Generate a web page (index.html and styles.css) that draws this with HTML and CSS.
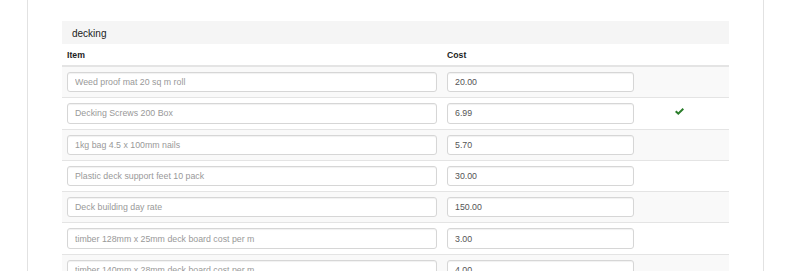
FILE: index.html
```html
<!DOCTYPE html>
<html lang="en">
<head>
  <meta charset="UTF-8">
  <title>Decking costs</title>
  <link rel="stylesheet" href="styles.css">
</head>
<body>
  <div class="page">
    <div class="panel">
      <div class="panel-heading">decking</div>
      <table class="costs">
        <thead>
          <tr>
            <th class="col-item">Item</th>
            <th class="col-cost">Cost</th>
            <th class="col-status"></th>
          </tr>
        </thead>
        <tbody>
          <tr>
            <td><input type="text" placeholder="Weed proof mat 20 sq m roll"></td>
            <td><input type="text" value="20.00"></td>
            <td class="status"></td>
          </tr>
          <tr>
            <td><input type="text" placeholder="Decking Screws 200 Box"></td>
            <td><input type="text" value="6.99"></td>
            <td class="status">
              <svg class="tick" viewBox="0 0 9 7" width="9" height="7"><polygon points="0,3.9 1.4,2.5 3.3,4.3 7.6,0 9,1.4 3.3,7"/></svg>
            </td>
          </tr>
          <tr>
            <td><input type="text" placeholder="1kg bag 4.5 x 100mm nails"></td>
            <td><input type="text" value="5.70"></td>
            <td class="status"></td>
          </tr>
          <tr>
            <td><input type="text" placeholder="Plastic deck support feet 10 pack"></td>
            <td><input type="text" value="30.00"></td>
            <td class="status"></td>
          </tr>
          <tr>
            <td><input type="text" placeholder="Deck building day rate"></td>
            <td><input type="text" value="150.00"></td>
            <td class="status"></td>
          </tr>
          <tr>
            <td><input type="text" placeholder="timber 128mm x 25mm deck board cost per m"></td>
            <td><input type="text" value="3.00"></td>
            <td class="status"></td>
          </tr>
          <tr>
            <td><input type="text" placeholder="timber 140mm x 28mm deck board cost per m"></td>
            <td><input type="text" value="4.00"></td>
            <td class="status"></td>
          </tr>
        </tbody>
      </table>
    </div>
  </div>
</body>
</html>
```

FILE: styles.css
```css
html, body {
  margin: 0;
  background: #fff;
  font-family: "Liberation Sans", Arial, sans-serif;
  color: #333;
  overflow: hidden;
}

.page {
  margin-left: 27px;
  width: 737px;
  height: 271px;
  box-sizing: border-box;
  border-left: 1px solid #e2e2e2;
  border-right: 1px solid #e2e2e2;
  padding: 21px 34px 0;
  overflow: hidden;
}

.panel { width: 667px; }

.panel-heading {
  background: #f5f5f5;
  height: 23px;
  line-height: 25px;
  padding-left: 10px;
  font-size: 10px;
  color: #222;
}

.costs {
  width: 667px;
  border-collapse: collapse;
  table-layout: fixed;
}

.costs th {
  text-align: left;
  font-size: 8.7px;
  font-weight: bold;
  color: #222;
  height: 19px;
  line-height: 19px;
  padding: 2px 5px 0;
  border-bottom: 2px solid #e4e4e4;
}

.col-item { width: 370px; }
.col-cost { width: 187px; }

.costs td {
  padding: 5px;
  border-top: 1px solid #e4e4e4;
  vertical-align: middle;
}

.costs tbody tr:nth-child(odd) td { background: #f9f9f9; }

.costs input {
  display: block;
  width: 100%;
  height: 20.3px;
  box-sizing: border-box;
  margin: 0;
  padding: 0 7px;
  border: 1px solid #d6d6d6;
  border-radius: 3px;
  background: #fff;
  box-shadow: inset 0 1px 1px rgba(0,0,0,0.06);
  font-family: "Liberation Sans", Arial, sans-serif;
  font-size: 8.8px;
  color: #555;
}

.costs input::placeholder { color: #999; }

.status { padding-left: 36px !important; }

.tick { display: block; fill: #2a7d2a; margin-top: -3px; }
```
